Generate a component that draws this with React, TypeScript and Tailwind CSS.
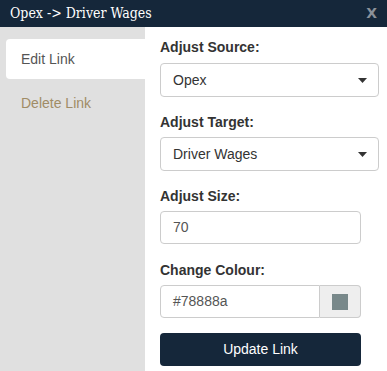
export default function App() {
  return (
    <div className="w-[387px] h-[371px] flex flex-col bg-white overflow-hidden font-['Liberation_Sans',Arial,sans-serif] text-[14px] text-[#333]">
      {/* Title bar */}
      <div className="h-[27px] bg-[#15273a] flex items-center justify-between pl-[10px] pr-[10px] shrink-0">
        <span className="font-['DejaVu_Serif_Condensed','DejaVu_Serif',serif] [font-stretch:condensed] text-[14px] text-white">Opex -&gt; Driver Wages</span>
        <span className="font-['DejaVu_Sans',sans-serif] font-bold text-[14px] text-[#8a9199]">X</span>
      </div>

      <div className="flex flex-1">
        {/* Tabs */}
        <div className="w-[145px] bg-[#e0e0e0] pt-[12px] pl-[6px] flex flex-col shrink-0">
          <div className="h-[40px] bg-white rounded-l-[4px] flex items-center pl-[15px] text-[#555]">Edit Link</div>
          <div className="h-[48px] flex items-center pl-[15px] text-[#a08c66]">Delete Link</div>
        </div>

        {/* Form */}
        <div className="flex-1 pl-[15px] pr-[8px] pt-[10px] flex flex-col">
          <label className="font-bold text-[14px] text-[#333] leading-[20px]">Adjust Source:</label>
          <div className="mt-[6px] h-[34px] border border-[#ccc] rounded-[4px] flex items-center justify-between pl-[12px] pr-[11px]">
            <span>Opex</span>
            <svg width="9" height="5" viewBox="0 0 9 5"><path d="M0 0h9L4.5 5z" fill="#333" /></svg>
          </div>

          <label className="mt-[15px] font-bold text-[14px] text-[#333] leading-[20px]">Adjust Target:</label>
          <div className="mt-[5px] h-[34px] border border-[#ccc] rounded-[4px] flex items-center justify-between pl-[12px] pr-[11px]">
            <span>Driver Wages</span>
            <svg width="9" height="5" viewBox="0 0 9 5"><path d="M0 0h9L4.5 5z" fill="#333" /></svg>
          </div>

          <label className="mt-[15px] font-bold text-[14px] text-[#333] leading-[20px]">Adjust Size:</label>
          <div className="mt-[5px] w-[201px] h-[33px] border border-[#ccc] rounded-[4px] flex items-center pl-[12px]">
            <span className="text-[#555]">70</span>
          </div>

          <label className="mt-[16px] font-bold text-[14px] text-[#333] leading-[20px]">Change Colour:</label>
          <div className="mt-[5px] w-[201px] h-[33px] flex">
            <div className="flex-1 border border-[#ccc] rounded-l-[4px] flex items-center pl-[12px]">
              <span className="text-[#555]">#78888a</span>
            </div>
            <div className="w-[41px] border border-l-0 border-[#ccc] rounded-r-[4px] bg-[#eee] flex items-center justify-center">
              <div className="w-[16px] h-[16px] bg-[#78888a]" />
            </div>
          </div>

          <button className="mt-[15px] w-[201px] h-[33px] bg-[#15273a] rounded-[4px] text-white text-[14px]">Update Link</button>
        </div>
      </div>
    </div>
  )
}
